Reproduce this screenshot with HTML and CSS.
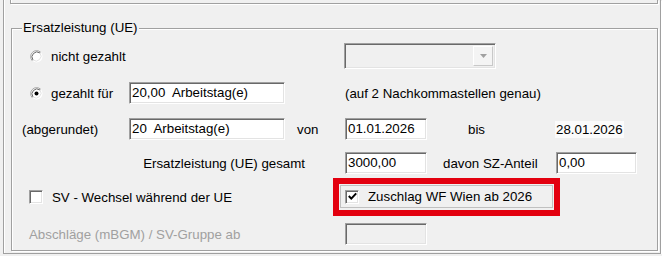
FILE: index.html
```html
<!DOCTYPE html>
<html lang="de">
<head>
  <meta charset="UTF-8" />
  <title>Ersatzleistung (UE)</title>
  <link rel="stylesheet" href="styles.css">
</head>
<body>

  <div class="panel">
    <div class="prev-group"></div>

    <fieldset class="group">
      <legend>Ersatzleistung (UE)</legend>

      <!-- Auswahl: nicht gezahlt -->
      <div class="row row-1">
        <label class="option option-wide">
          <svg class="radio" width="13" height="13" viewBox="0 0 13 13">
            <circle cx="6.5" cy="6.5" r="6" fill="#fff"/>
            <path d="M2.26 10.74 A6 6 0 0 1 10.74 2.26" stroke="#a0a0a0" fill="none"/>
            <path d="M3 10 A5 5 0 0 1 10 3" stroke="#696969" fill="none"/>
            <path d="M10 3 A5 5 0 0 1 3 10" stroke="#e3e3e3" fill="none"/>
          </svg>
          <span>nicht gezahlt</span>
        </label>
        <div class="combo">
          <span class="combo-btn">
            <svg width="7" height="4" viewBox="0 0 7 4"><path d="M0 0 H7 L3.5 4 Z" fill="#a0a0a0"/></svg>
          </span>
        </div>
      </div>

      <!-- Auswahl: gezahlt für -->
      <div class="row row-2">
        <label class="option option-lead">
          <svg class="radio" width="13" height="13" viewBox="0 0 13 13">
            <circle cx="6.5" cy="6.5" r="6" fill="#fff"/>
            <path d="M2.26 10.74 A6 6 0 0 1 10.74 2.26" stroke="#a0a0a0" fill="none"/>
            <path d="M3 10 A5 5 0 0 1 10 3" stroke="#696969" fill="none"/>
            <path d="M10 3 A5 5 0 0 1 3 10" stroke="#e3e3e3" fill="none"/>
            <circle cx="6.5" cy="6.5" r="2" fill="#000"/>
          </svg>
          <span>gezahlt für</span>
        </label>
        <div class="field field-wide">20,00  Arbeitstag(e)</div>
        <span class="note">(auf 2 Nachkommastellen genau)</span>
      </div>

      <div class="row row-3">
        <span class="lead">(abgerundet)</span>
        <div class="field field-wide">20  Arbeitstag(e)</div>
        <span class="von">von</span>
        <div class="field field-date">01.01.2026</div>
        <span class="bis">bis</span>
        <span class="readonly">28.01.2026</span>
      </div>

      <div class="row row-4">
        <span class="sum-label">Ersatzleistung (UE) gesamt</span>
        <div class="field field-date">3000,00</div>
        <span class="sz-label">davon SZ-Anteil</span>
        <div class="field field-sz">0,00</div>
      </div>

      <div class="row row-5">
        <label class="check-lead">
          <span class="checkbox"></span>
          <span>SV - Wechsel während der UE</span>
        </label>
        <div class="highlight">
          <label class="highlight-inner">
            <span class="checkbox">
              <svg width="9" height="9" viewBox="0 0 9 9"><path d="M0.8 4 L3.3 6.6 L8.2 1.4" stroke="#000" stroke-width="2" fill="none"/></svg>
            </span>
            <span>Zuschlag WF Wien ab 2026</span>
          </label>
        </div>
      </div>

      <div class="row row-6">
        <span class="muted">Abschläge (mBGM) / SV-Gruppe ab</span>
        <div class="field field-date disabled"></div>
      </div>
    </fieldset>
  </div>

</body>
</html>
```

FILE: styles.css
```css
body {
  margin: 0;
  background: #f0f0f0;
  font-family: "Liberation Sans", Arial, sans-serif;
  font-size: 13.3px;
  color: #000;
}

.panel {
  box-sizing: border-box;
  width: 658px;
  height: 254px;
  margin-left: 3px;
  border: 1px solid #a0a0a0;
  border-top: none;
  box-shadow: inset 1px 0 0 #fff, 1px 1px 0 #fff;
}

.prev-group {
  box-sizing: border-box;
  width: 648px;
  height: 4px;
  margin-left: 6px;
  border: 1px solid #a0a0a0;
  border-top: none;
  box-shadow: inset 1px 0 0 #fff, 1px 1px 0 #fff;
}

.group {
  box-sizing: border-box;
  width: 647px;
  height: 231px;
  min-width: 0;
  margin: 16px 0 0 7px;
  padding: 0 0 0 10px;
  border: 1px solid #a0a0a0;
  box-shadow: inset 1px 1px 0 #fff, 1px 1px 0 #fff;
}

.group legend {
  padding: 0 1px;
  line-height: 16px;
  background: #f0f0f0;
}

.row {
  display: flex;
  align-items: center;
  height: 22px;
  white-space: nowrap;
}

.row-1 { height: 26px; margin-top: 7px; }
.row-2 { margin-top: 13px; }
.row-3 { margin-top: 14px; }
.row-4 { margin-top: 12px; }
.row-5 { height: 38px; margin-top: 4px; }
.row-6 { margin-top: 7px; }

.option {
  display: flex;
  align-items: center;
  flex: none;
}

.option-wide { width: 322px; }
.option-lead { width: 107px; }

.radio {
  margin-left: 8px;
  margin-right: 8px;
  flex: none;
}

/* sunken text boxes */
.field {
  box-sizing: border-box;
  flex: none;
  height: 22px;
  padding: 0 2px;
  line-height: 19px;
  white-space: pre;
  background: #fff;
  border: 1px solid;
  border-color: #a0a0a0 #fff #fff #a0a0a0;
  box-shadow: inset 1px 1px 0 #696969, inset -1px -1px 0 #e3e3e3;
}

.field-wide { width: 156px; }
.field-date { width: 82px; }
.field-sz { width: 81px; }

.field.disabled {
  background: #f0f0f0;
}

.combo {
  box-sizing: border-box;
  display: flex;
  align-items: center;
  justify-content: flex-end;
  width: 152px;
  height: 26px;
  padding-right: 2px;
  background: #f0f0f0;
  border: 1px solid;
  border-color: #a0a0a0 #fff #fff #a0a0a0;
  box-shadow: inset 1px 1px 0 #696969, inset -1px -1px 0 #e3e3e3;
}

.combo-btn {
  box-sizing: border-box;
  display: flex;
  align-items: center;
  justify-content: center;
  width: 20px;
  height: 20px;
  background: #f4f4f4;
  border: 1px solid;
  border-color: #fff #c8c8c8 #c8c8c8 #fff;
}

.note { margin-left: 60px; }

.lead {
  flex: none;
  width: 107px;
}

.von {
  box-sizing: border-box;
  flex: none;
  width: 60px;
  padding-left: 12px;
}

.bis {
  box-sizing: border-box;
  flex: none;
  width: 128px;
  padding-left: 41px;
}

.readonly {
  padding: 1px 1px;
  background: #fbfbfb;
}

.sum-label {
  box-sizing: border-box;
  flex: none;
  width: 323px;
  padding-right: 40px;
  text-align: right;
}

.sz-label {
  box-sizing: border-box;
  flex: none;
  width: 129px;
  padding-left: 16px;
}

.check-lead {
  display: flex;
  align-items: center;
  flex: none;
  width: 311px;
}

.checkbox {
  box-sizing: border-box;
  display: flex;
  align-items: center;
  justify-content: center;
  flex: none;
  width: 14px;
  height: 14px;
  margin-right: 9px;
  background: #fff;
  border: 1px solid;
  border-color: #a0a0a0 #fff #fff #a0a0a0;
  box-shadow: inset 1px 1px 0 #696969, inset -1px -1px 0 #e3e3e3;
}

.check-lead .checkbox { margin-left: 7px; }

.highlight {
  box-sizing: border-box;
  flex: none;
  width: 227px;
  height: 38px;
  padding: 1px 1px 2px 1px;
  border: 6px solid #e3000f;
}

.highlight-inner {
  box-sizing: border-box;
  display: flex;
  align-items: center;
  height: 100%;
  padding-left: 4px;
  border: 1px solid #c0c0c0;
}

.muted {
  box-sizing: border-box;
  flex: none;
  width: 323px;
  padding-left: 7px;
  color: #a0a0a0;
}
```
